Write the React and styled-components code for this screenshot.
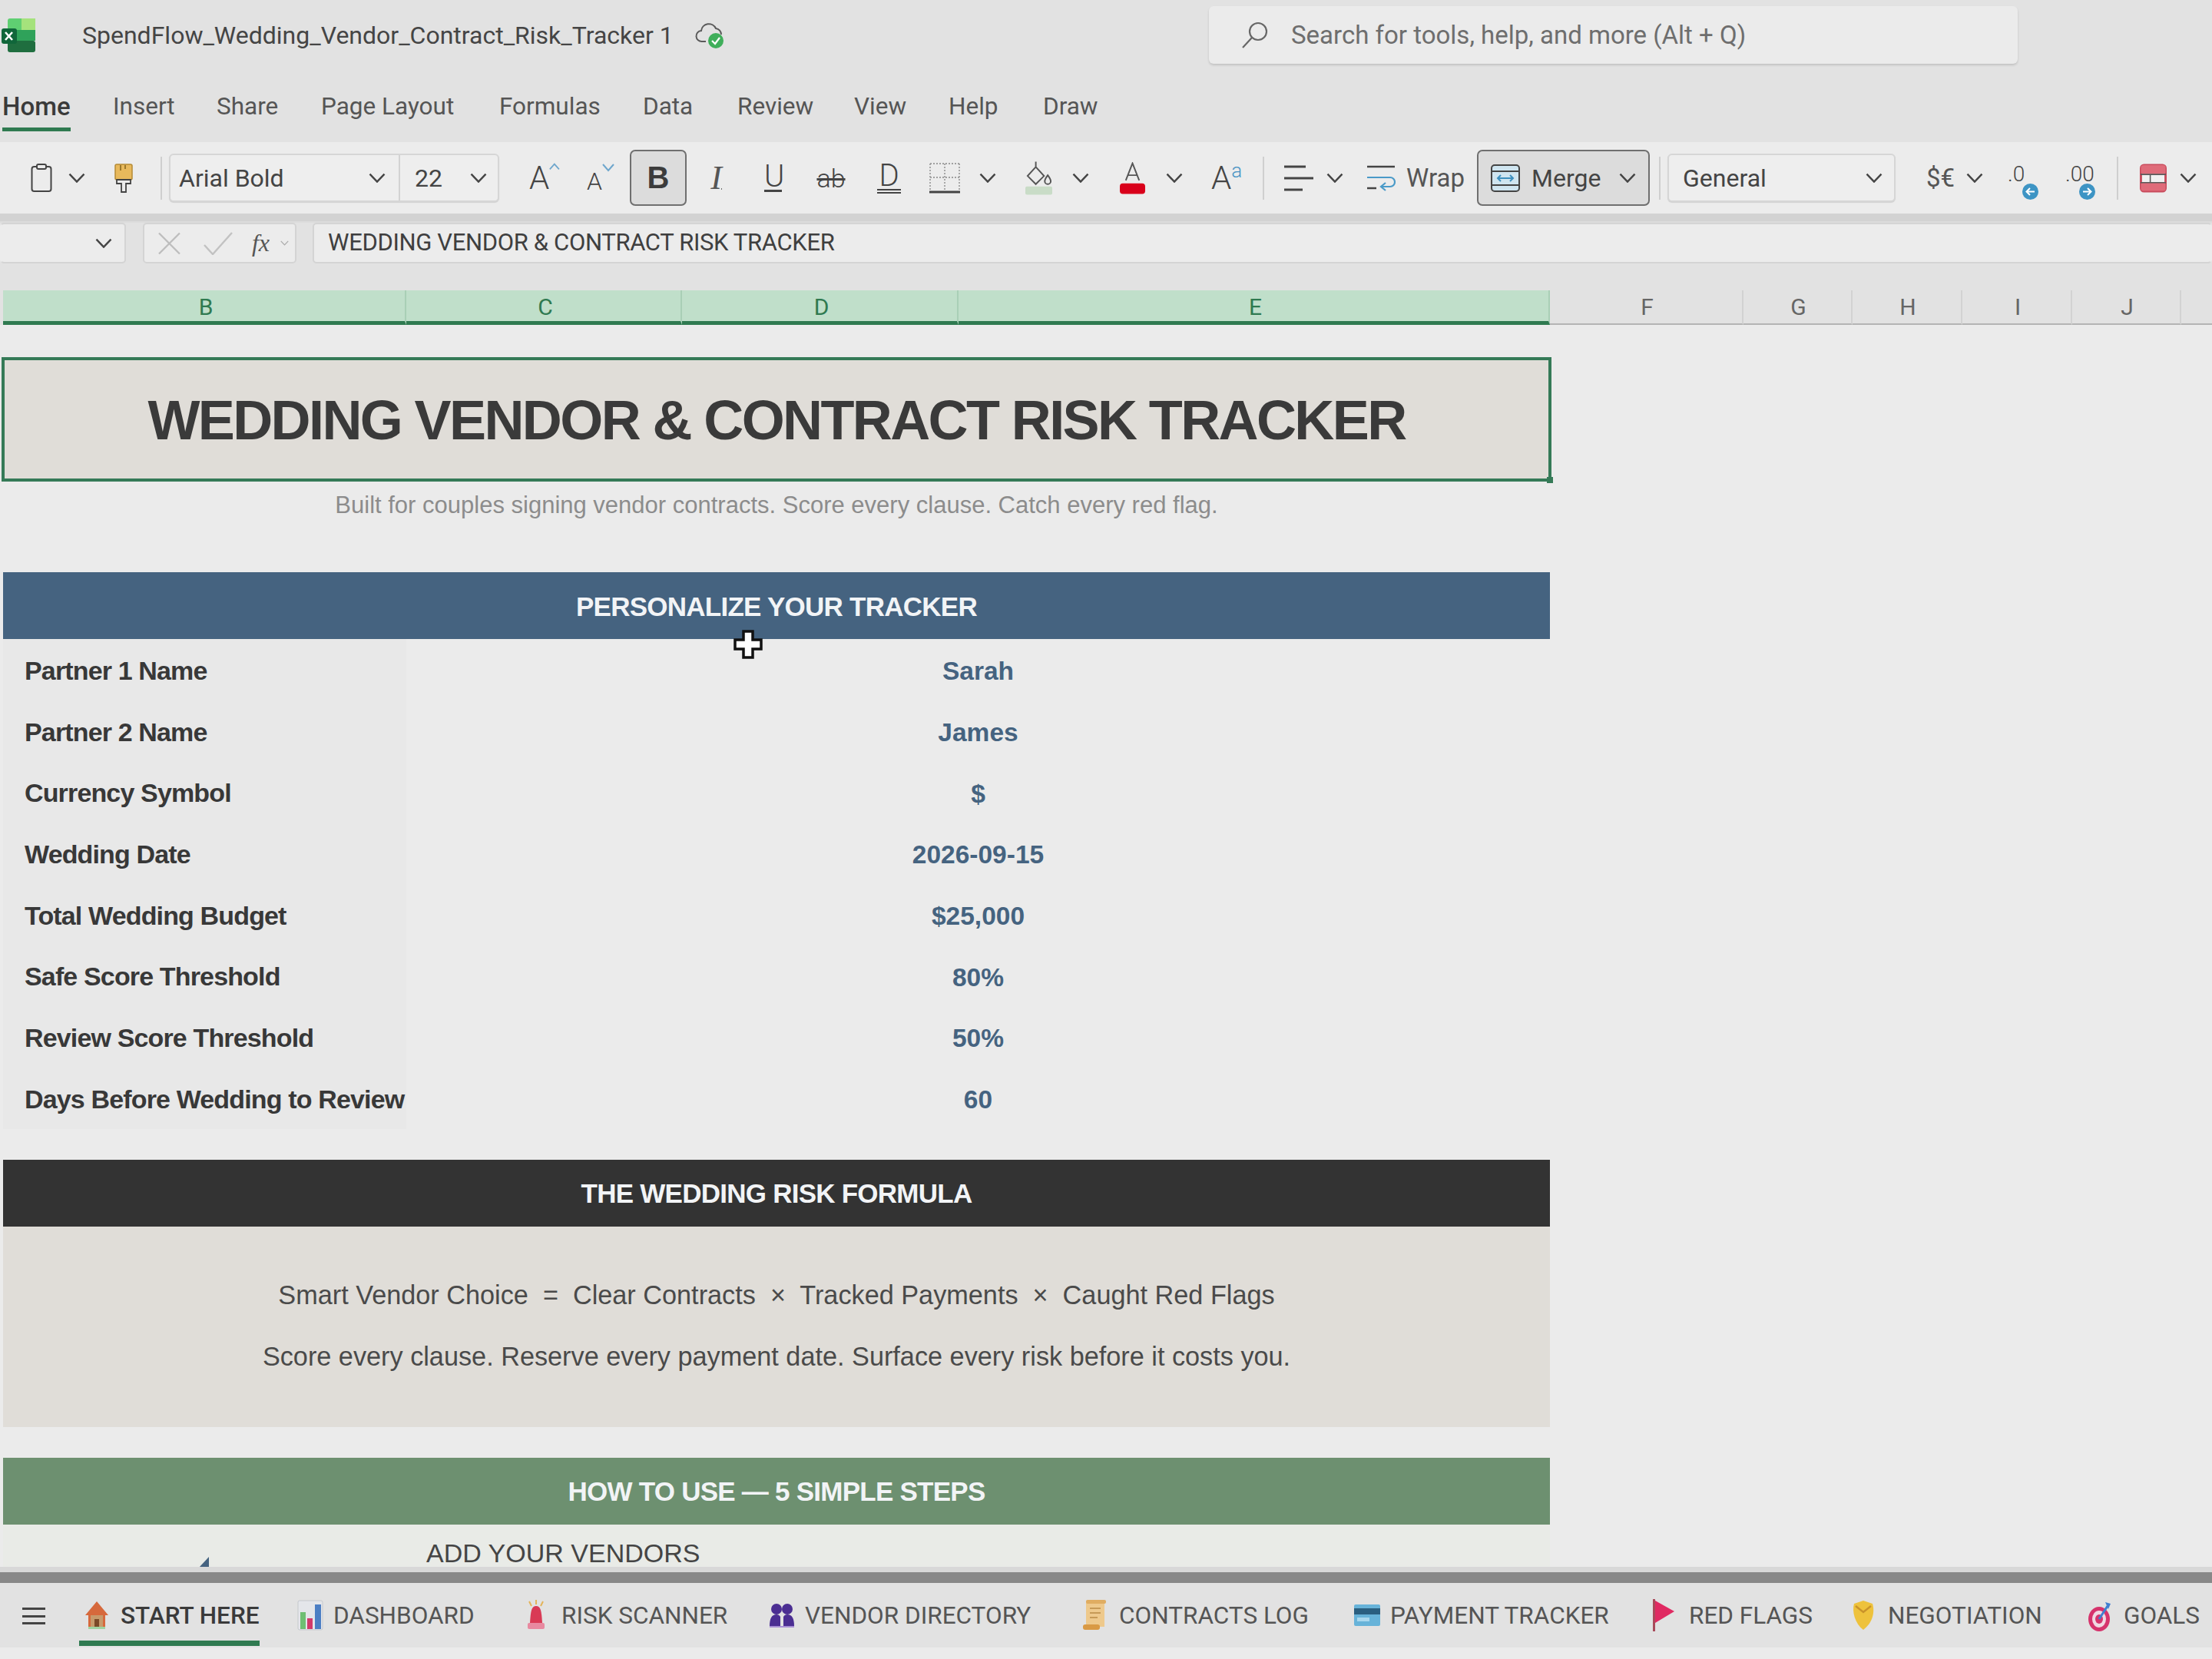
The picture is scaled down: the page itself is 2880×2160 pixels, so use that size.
import React from 'react';
import styled, { createGlobalStyle } from 'styled-components';

const GlobalStyle = createGlobalStyle`
  html, body { margin: 0; padding: 0; background: #ebebeb; }
  * { box-sizing: border-box; }
`;

const ui = `Roboto, "Open Sans", sans-serif`;
const cellFont = `"Liberation Sans", Arial, sans-serif`;

const Page = styled.div`
  position: relative;
  width: 2880px;
  height: 2160px;
  overflow: hidden;
  display: flex;
  flex-direction: column;
  background: #ebebeb;
  font-family: ${ui};
`;

const TitleBar = styled.div`
  height: 92px;
  flex: none;
  display: flex;
  align-items: center;
  background: #e2e2e2;
  padding-left: 2px;
`;

const FileName = styled.span`
  width: 769px;
  margin-left: 61px;
  font-size: 32px;
  color: #454545;
  white-space: nowrap;
`;

const CloudWrap = styled.span`
  display: flex;
  margin-left: 29px;
`;

const SearchBox = styled.div`
  margin-left: 631px;
  margin-top: -1px;
  width: 1053px;
  height: 75px;
  display: flex;
  align-items: center;
  padding-left: 42px;
  gap: 29px;
  border-radius: 6px;
  background: #ebebeb;
  box-shadow: 0 2px 3px rgba(0, 0, 0, 0.14);
  font-size: 33px;
  color: #6e6e6e;
`;

const RibbonTabs = styled.div`
  height: 93px;
  flex: none;
  display: flex;
  align-items: flex-start;
  background: #e2e2e2;
  padding-left: 3px;
`;

const RibbonSlot = styled.div`
  flex: none;
  width: ${p => p.$w}px;
`;

const RibbonTab = styled.span`
  display: inline-block;
  height: 79px;
  padding-top: 28px;
  font-size: ${p => (p.$active ? 33 : 31.5)}px;
  line-height: 38px;
  font-weight: ${p => (p.$active ? 500 : 400)};
  color: ${p => (p.$active ? '#3a3a3a' : '#555')};
  border-bottom: ${p => (p.$active ? '5px solid #2f7a50' : '5px solid transparent')};
`;

const Toolbar = styled.div`
  height: 93px;
  flex: none;
  display: flex;
  align-items: center;
  background: #ececec;
  padding-left: 40px;
  color: #444;
`;

const Tool = styled.span`
  flex: none;
  display: flex;
  align-items: center;
  width: ${p => (p.$w ? `${p.$w}px` : 'auto')};
  margin-left: ${p => p.$m || 0}px;
`;

const Divider = styled.span`
  flex: none;
  width: 2px;
  height: 56px;
  margin-left: ${p => p.$m}px;
  background: #cfcfcf;
`;

const SelectGroup = styled.div`
  flex: none;
  width: ${p => p.$w}px;
  height: 63px;
  margin-left: ${p => p.$m}px;
  display: flex;
  border: 2px solid #d6d6d6;
  border-radius: 6px;
  background: #eeeeee;
  box-shadow: 0 1px 1px rgba(0, 0, 0, 0.12);
`;

const SelectPart = styled.div`
  display: flex;
  align-items: center;
  justify-content: space-between;
  width: ${p => p.$w}px;
  padding: ${p => `0 ${p.$pr}px 0 ${p.$pl}px`};
  font-size: 32px;
  color: #444;
  & + & { border-left: 2px solid #d2d2d2; }
`;

const ToggleButton = styled.span`
  flex: none;
  width: ${p => p.$w}px;
  height: 73px;
  margin-left: ${p => p.$m}px;
  display: flex;
  align-items: center;
  justify-content: ${p => (p.$wide ? 'flex-start' : 'center')};
  padding-left: ${p => (p.$wide ? 16 : 0)}px;
  border: 2px solid #6f6f6f;
  border-radius: 7px;
  background: #dcdcdc;
  font-size: 32px;
  color: #444;
`;

const BoldGlyph = styled.span`
  font-family: ${cellFont};
  font-weight: 700;
  font-size: 40px;
  color: #3c3c3c;
`;

const ItalicGlyph = styled.span`
  width: 32px;
  text-align: center;
  font-family: "Liberation Serif", serif;
  font-style: italic;
  font-size: 44px;
  line-height: 44px;
  color: #555;
  text-decoration: underline;
  text-decoration-thickness: 2px;
  text-underline-offset: -1px;
`;

const LightGlyph = styled.span`
  font-size: ${p => p.$size}px;
  line-height: ${p => p.$size}px;
  font-weight: 300;
  color: ${p => p.$color || '#444'};
  margin-top: ${p => p.$up || 0}px;
`;

const UnderGlyph = styled.span`
  display: block;
  width: ${p => p.$w}px;
  text-align: center;
  font-size: 40px;
  font-weight: 300;
  line-height: 34px;
  color: #444;
  border-bottom: ${p => (p.$double ? '6px double #444' : '3px solid #444')};
`;

const StrikeGlyph = styled.span`
  display: block;
  width: 42px;
  text-align: center;
  font-size: 34px;
  line-height: 36px;
  font-weight: 300;
  color: #444;
  text-decoration: line-through;
  text-decoration-thickness: 3px;
`;

const ToolText = styled.span`
  font-size: 33px;
  color: #555;
  white-space: nowrap;
`;

const DecimalGlyph = styled.span`
  position: relative;
  display: flex;
  width: 40px;
  height: 40px;
  font-size: 28px;
  font-weight: 300;
  line-height: 30px;
  color: #444;
`;

const BlueDot = styled.span`
  position: absolute;
  right: 0;
  bottom: -8px;
  width: 21px;
  height: 21px;
  display: flex;
  align-items: center;
  justify-content: center;
  border-radius: 50%;
  background: #3d94c4;
`;

const GreyStrip = styled.div`
  height: 12px;
  flex: none;
  background: #d2d2d2;
  border-bottom: 2px solid #dcdcdc;
`;

const FormulaBar = styled.div`
  height: 88px;
  flex: none;
  display: flex;
  align-items: flex-start;
  background: #e2e2e2;
`;

const BarBox = styled.div`
  flex: ${p => (p.$grow ? 1 : 'none')};
  width: ${p => p.$w}px;
  height: 53px;
  margin-left: ${p => p.$m}px;
  display: flex;
  align-items: center;
  justify-content: ${p => (p.$end ? 'flex-end' : 'flex-start')};
  padding: ${p => p.$pad};
  background: #ececec;
  border: 2px solid #d4d4d4;
  border-left-color: ${p => (p.$flushLeft ? 'transparent' : '#d4d4d4')};
  border-right-color: ${p => (p.$flushRight ? 'transparent' : '#d4d4d4')};
  border-radius: 5px;
`;

const FormulaText = styled.span`
  margin-top: -3px;
  font-size: 31px;
  color: #3f3f3f;
  letter-spacing: -0.35px;
  white-space: nowrap;
`;

const FxGlyph = styled.span`
  margin-left: 25px;
  font-family: "Liberation Serif", serif;
  font-style: italic;
  font-size: 32px;
  color: #555;
`;

const ColumnRow = styled.div`
  height: 45px;
  flex: none;
  display: flex;
  background: #e2e2e2;
  padding-left: 4px;
`;

const ColumnHead = styled.div`
  width: ${p => p.$w}px;
  display: flex;
  align-items: center;
  justify-content: center;
  padding: ${p => (p.$on ? '3px 0 0 5px' : '0 0 0 3px')};
  font-size: 30px;
  color: ${p => (p.$on ? '#2f7a50' : '#666')};
  background: ${p => (p.$on ? '#c0dfca' : 'transparent')};
  border-right: 2px solid ${p => (p.$on ? '#a9cfb6' : '#d2d2d2')};
  border-bottom: ${p => (p.$on ? '5px solid #2f7a50' : '2px solid #b4b4b4')};
`;

const ColumnFill = styled.div`
  flex: 1;
  border-bottom: 2px solid #b4b4b4;
`;

const Sheet = styled.div`
  height: 1617px;
  flex: none;
  overflow: hidden;
  padding: 42px 0 0 4px;
  width: 2880px;
  background: #ebebeb;
  font-family: ${cellFont};
`;

const Block = styled.div`
  width: 2014px;
`;

const TitleCell = styled.div`
  position: relative;
  width: 2018px;
  height: 162px;
  margin-left: -2px;
  padding-top: 2px;
  display: flex;
  align-items: center;
  justify-content: center;
  background: #e0ddd8;
  border: 4px solid #357a57;
  font-size: 72px;
  font-weight: 700;
  letter-spacing: -2.6px;
  color: #3a3a3a;
  white-space: nowrap;
`;

const Handle = styled.span`
  position: absolute;
  right: -6px;
  bottom: -6px;
  width: 8px;
  height: 8px;
  background: #357a57;
`;

const Subtitle = styled.div`
  height: 62px;
  width: 2014px;
  display: flex;
  align-items: center;
  justify-content: center;
  font-size: 31px;
  color: #8c8c8c;
`;

const SectionHead = styled.div`
  width: 2014px;
  height: 87px;
  margin-top: ${p => p.$top}px;
  padding-top: 2px;
  display: flex;
  align-items: center;
  justify-content: center;
  background: ${p => p.$bg};
  color: #f2f4f6;
  font-size: 35px;
  font-weight: 700;
  letter-spacing: -0.75px;
  white-space: nowrap;
`;

const SettingRow = styled.div`
  display: grid;
  grid-template-columns: 525px 1489px;
  height: 79.7px;
  align-items: stretch;
`;

const SettingLabel = styled.div`
  display: flex;
  align-items: center;
  padding: 3px 0 0 28px;
  background: #e8e8e8;
  font-size: 34px;
  font-weight: 700;
  letter-spacing: -0.85px;
  color: #383838;
  white-space: nowrap;
`;

const SettingValue = styled.div`
  display: flex;
  align-items: center;
  justify-content: center;
  padding-top: 5px;
  font-size: 33.5px;
  font-weight: 700;
  color: #456380;
`;

const FormulaBlock = styled.div`
  width: 2014px;
  height: 261px;
  padding-top: 50px;
  background: #e0ddd8;
  color: #4a4a4a;
  font-size: 34.25px;
`;

const FormulaLine = styled.div`
  height: 80px;
  display: flex;
  align-items: center;
  justify-content: center;
  white-space: pre;
`;

const StepRow = styled.div`
  display: flex;
  height: 76px;
  align-items: center;
  padding-left: 551px;
  position: relative;
  font-size: 34px;
  color: #454545;
  background: #e9ebe7;
  width: 2014px;
`;

const StepMark = styled.span`
  position: absolute;
  left: 255px;
  top: 42px;
  display: flex;
`;

const ShadeStrip = styled.div`
  height: 7px;
  flex: none;
  background: #d8d8d8;
`;

const ScrollStrip = styled.div`
  height: 14px;
  flex: none;
  background: #888888;
`;

const SheetTabs = styled.div`
  height: 84px;
  flex: none;
  display: flex;
  align-items: flex-start;
  background: #e2e2e2;
  padding-left: 29px;
`;

const MenuGlyph = styled.span`
  flex: none;
  width: 30px;
  height: 22px;
  margin-top: 32px;
  margin-right: 44px;
  border-top: 3px solid #444;
  border-bottom: 3px solid #444;
  position: relative;
  &::after {
    content: '';
    position: absolute;
    left: 0;
    right: 0;
    top: 6.5px;
    height: 3px;
    background: #444;
  }
`;

const TabSlot = styled.div`
  flex: none;
  width: ${p => p.$w}px;
`;

const SheetTab = styled.div`
  display: inline-flex;
  align-items: center;
  height: 82px;
  padding: 9px 0 0 7px;
  font-size: 31.5px;
  font-weight: ${p => (p.$active ? 500 : 400)};
  color: ${p => (p.$active ? '#3a3a3a' : '#555')};
  white-space: nowrap;
  border-bottom: 7px solid ${p => (p.$active ? '#2f7a50' : 'transparent')};
`;

const TabIconSlot = styled.span`
  flex: none;
  display: flex;
  align-items: center;
  width: 47px;
`;

const FootStrip = styled.div`
  flex: 1;
  background: #ebebeb;
`;

const Cursor = styled.svg`
  position: absolute;
  left: 955px;
  top: 820px;
`;

const Chevron = ({ m = 0, w = 22, color = '#444' }) => (
  <Tool $m={m}>
    <svg width={w} height={w * 0.6} viewBox="0 0 22 13" fill="none">
      <path d="M1.5 1.5 11 11.5 20.5 1.5" stroke={color} strokeWidth="2.4" />
    </svg>
  </Tool>
);

const ExcelLogo = () => (
  <svg width="44" height="44" viewBox="0 0 44 44">
    <rect x="8" y="0" width="36" height="15" rx="3" fill="#5fcf72" />
    <rect x="26" y="0" width="18" height="15" fill="#a5e27c" />
    <rect x="8" y="15" width="36" height="14" fill="#2fa25a" />
    <rect x="8" y="29" width="36" height="15" rx="3" fill="#1f6e3f" />
    <rect x="0" y="13" width="20" height="20" rx="3" fill="#10663a" />
    <path d="M5 18l9 10M14 18l-9 10" stroke="#fff" strokeWidth="2.6" />
  </svg>
);

const CloudIcon = () => (
  <svg width="38" height="36" viewBox="0 0 38 36" fill="none">
    <path d="M14 26H9a7 7 0 0 1-1-14 10 10 0 0 1 19-3 8 8 0 0 1 7 8" stroke="#5a5a5a" strokeWidth="2" />
    <circle cx="27" cy="25" r="10" fill="#3fae5a" />
    <path d="M22 25l4 4 6-8" stroke="#fff" strokeWidth="2.2" />
  </svg>
);

const SearchIcon = () => (
  <svg width="36" height="36" viewBox="0 0 36 36" fill="none" stroke="#666" strokeWidth="2.2">
    <circle cx="22" cy="13" r="11" />
    <path d="M14 21 2 34" />
  </svg>
);

const ClipboardIcon = () => (
  <svg width="28" height="38" viewBox="0 0 28 38" fill="none" stroke="#444" strokeWidth="2">
    <rect x="1.5" y="4" width="25" height="32" rx="3" />
    <rect x="8" y="1" width="12" height="6" rx="2" fill="#ececec" />
  </svg>
);

const BrushIcon = () => (
  <svg width="24" height="38" viewBox="0 0 24 38">
    <rect x="1" y="1" width="22" height="20" rx="2" fill="#e8b95c" stroke="#b58a35" strokeWidth="1.5" />
    <path d="M8 2v7M14 2v5" stroke="#8a6a20" strokeWidth="1.6" />
    <path d="M3 21h18v5h-6v11H9V26H3z" fill="#ececec" stroke="#444" strokeWidth="1.8" />
  </svg>
);

const Caret = ({ up }) => (
  <svg width="16" height="12" viewBox="0 0 16 12" fill="none" style={{ alignSelf: 'flex-start' }}>
    <path d={up ? 'M1 10 8 2 15 10' : 'M1 2 8 10 15 2'} stroke="#6ea6cc" strokeWidth="2" />
  </svg>
);

const BordersIcon = () => (
  <svg width="40" height="40" viewBox="0 0 40 40" fill="none">
    <path d="M1 1h38M1 1v36M39 1v36M20 1v36M1 19h38" stroke="#a0a0a0" strokeWidth="1.8" strokeDasharray="2 2" />
    <path d="M0 38h40" stroke="#444" strokeWidth="3" />
  </svg>
);

const FillIcon = () => (
  <svg width="36" height="44" viewBox="0 0 36 44" fill="none">
    <path d="M14 0v8M14 7 3 19l11 11 11-11z" stroke="#555" strokeWidth="2" />
    <path d="M30 18c3 4 4 6 4 8a4 4 0 0 1-8 0c0-2 1-4 4-8z" stroke="#555" strokeWidth="2" />
    <rect x="0" y="33" width="36" height="11" rx="2" fill="#c9dcc7" />
  </svg>
);

const FontColorIcon = () => (
  <svg width="34" height="42" viewBox="0 0 34 42" fill="none">
    <path d="M8 24 17 1l9 23M11 17h12" stroke="#555" strokeWidth="2" />
    <rect x="0" y="28" width="34" height="14" rx="4" fill="#d9001b" />
  </svg>
);

const AlignIcon = () => (
  <svg width="38" height="34" viewBox="0 0 38 34" stroke="#444" strokeWidth="3">
    <path d="M0 2h28M0 17h38M0 32h24" />
  </svg>
);

const WrapIcon = () => (
  <svg width="38" height="34" viewBox="0 0 38 34" fill="none">
    <path d="M1 2h36M1 30h12" stroke="#444" strokeWidth="2.6" />
    <path d="M1 16h30a5 5 0 0 1 0 12H20" stroke="#4a9ac8" strokeWidth="2.2" />
    <path d="M25 23l-6 5 6 5" stroke="#4a9ac8" strokeWidth="2.2" />
  </svg>
);

const MergeIcon = () => (
  <svg width="38" height="36" viewBox="0 0 38 36" fill="none">
    <rect x="1" y="1" width="36" height="34" rx="4" fill="#cfe5f0" stroke="#444" strokeWidth="2" />
    <path d="M1 9h36M1 27h36" stroke="#444" strokeWidth="2" />
    <path d="M9 18h20M13 14l-4 4 4 4M25 14l4 4-4 4" stroke="#3d8fbe" strokeWidth="2" />
  </svg>
);

const TableIcon = () => (
  <svg width="36" height="38" viewBox="0 0 36 38" fill="none">
    <rect x="1.5" y="1.5" width="33" height="35" rx="4" fill="#f1f1f1" stroke="#c84b5c" strokeWidth="3" />
    <rect x="1.5" y="1.5" width="33" height="12" rx="3" fill="#df6b79" />
    <rect x="1.5" y="25" width="33" height="11" rx="3" fill="#df6b79" />
    <path d="M1 14h34M1 25h34M14 14v11" stroke="#5a5a5a" strokeWidth="1.6" />
  </svg>
);

const DotArrow = ({ right }) => (
  <svg width="13" height="13" viewBox="0 0 13 13" fill="none" stroke="#fff" strokeWidth="2">
    <path d={right ? 'M1 6.5h10M7 2l4.5 4.5L7 11' : 'M12 6.5H2M6 2 1.5 6.5 6 11'} />
  </svg>
);

const HomeEmoji = () => (
  <svg width="32" height="38" viewBox="0 0 32 38">
    <path d="M16 1 1 19h4v15h22V19h4z" fill="#d6693c" />
    <rect x="8" y="19" width="16" height="15" fill="#c79a6b" />
    <rect x="13" y="24" width="6" height="10" fill="#7a4a28" />
    <rect x="5" y="34" width="22" height="3" fill="#9fd3a0" />
  </svg>
);

const ChartEmoji = () => (
  <svg width="34" height="40" viewBox="0 0 34 40">
    <rect x="1" y="1" width="32" height="38" rx="2" fill="#e4e6ea" stroke="#c5c8cd" />
    <rect x="4" y="16" width="7" height="22" fill="#6fbf73" />
    <rect x="13" y="24" width="7" height="14" fill="#d23a6b" />
    <rect x="23" y="6" width="8" height="32" fill="#4c7fc4" />
  </svg>
);

const SirenEmoji = () => (
  <svg width="28" height="40" viewBox="0 0 28 40">
    <path d="M14 0v6M5 2l3 6M23 2l-3 6" stroke="#e4b45a" strokeWidth="2" />
    <path d="M14 8c6 0 7 6 8 22H6C7 14 8 8 14 8z" fill="#d93a55" />
    <rect x="3" y="30" width="22" height="8" rx="2" fill="#e889a0" />
  </svg>
);

const PeopleEmoji = () => (
  <svg width="34" height="34" viewBox="0 0 34 34" fill="#4b2e92">
    <circle cx="10" cy="9" r="7" />
    <circle cx="24" cy="9" r="7" />
    <path d="M1 31c0-10 3-15 9-15 2 0 4 1 5 3v12zM19 31V19c1-2 3-3 5-3 6 0 9 5 9 15z" />
    <rect x="1" y="31" width="32" height="2" fill="#a88fd6" />
  </svg>
);

const ScrollEmoji = () => (
  <svg width="30" height="40" viewBox="0 0 30 40">
    <rect x="4" y="1" width="24" height="34" fill="#eec98c" />
    <rect x="0" y="32" width="22" height="7" rx="3" fill="#d99a45" />
    <rect x="4" y="0" width="26" height="5" rx="2" fill="#e0ad62" />
    <path d="M9 11h14M9 17h14M9 23h10" stroke="#b98a45" strokeWidth="1.6" />
  </svg>
);

const CardEmoji = () => (
  <svg width="34" height="30" viewBox="0 0 34 30">
    <rect x="0" y="1" width="34" height="28" rx="2" fill="#67b3d9" />
    <rect x="0" y="6" width="34" height="8" fill="#2a5f80" />
    <rect x="4" y="18" width="16" height="5" fill="#a9d8ee" />
  </svg>
);

const FlagEmoji = () => (
  <svg width="28" height="42" viewBox="0 0 28 42">
    <rect x="0" y="0" width="3" height="42" fill="#a84a5a" />
    <path d="M3 2 28 16 3 31z" fill="#e02a62" />
  </svg>
);

const HandshakeEmoji = () => (
  <svg width="30" height="38" viewBox="0 0 30 38">
    <path d="M3 4 15 0l12 4c3 10 1 24-12 34C4 30 0 14 3 4z" fill="#eec23c" />
    <path d="M5 7l10 8 10-8" stroke="#c9932a" strokeWidth="2.4" fill="none" />
  </svg>
);

const TargetEmoji = () => (
  <svg width="32" height="44" viewBox="0 0 32 44" fill="none">
    <ellipse cx="15" cy="27" rx="14" ry="16" fill="#d6336c" />
    <ellipse cx="15" cy="27" rx="9" ry="11" fill="#f0d8e2" />
    <ellipse cx="15" cy="27" rx="5" ry="6" fill="#d6336c" />
    <path d="M15 27 26 10" stroke="#3f7fd0" strokeWidth="3" />
    <path d="M23 5l7 2-3 7z" fill="#3f7fd0" />
  </svg>
);

const COLUMNS = [
  { id: 'B', w: 525, on: true },
  { id: 'C', w: 359, on: true },
  { id: 'D', w: 360, on: true },
  { id: 'E', w: 770, on: true },
  { id: 'F', w: 252 },
  { id: 'G', w: 142 },
  { id: 'H', w: 143 },
  { id: 'I', w: 143 },
  { id: 'J', w: 142 },
];

const SETTINGS = [
  ['Partner 1 Name', 'Sarah'],
  ['Partner 2 Name', 'James'],
  ['Currency Symbol', '$'],
  ['Wedding Date', '2026-09-15'],
  ['Total Wedding Budget', '$25,000'],
  ['Safe Score Threshold', '80%'],
  ['Review Score Threshold', '50%'],
  ['Days Before Wedding to Review', '60'],
];

const RIBBON = [
  ['Home', 144], ['Insert', 135], ['Share', 136], ['Page Layout', 232], ['Formulas', 187],
  ['Data', 123], ['Review', 152], ['View', 123], ['Help', 123], ['Draw', 90],
];

const TABS = [
  ['START HERE', HomeEmoji, 277],
  ['DASHBOARD', ChartEmoji, 297],
  ['RISK SCANNER', SirenEmoji, 317],
  ['VENDOR DIRECTORY', PeopleEmoji, 409],
  ['CONTRACTS LOG', ScrollEmoji, 353],
  ['PAYMENT TRACKER', CardEmoji, 389],
  ['RED FLAGS', FlagEmoji, 259],
  ['NEGOTIATION', HandshakeEmoji, 307],
  ['GOALS', TargetEmoji, 160],
];

const App = () => (
  <Page>
    <GlobalStyle />
    <TitleBar>
      <ExcelLogo />
      <FileName>SpendFlow_Wedding_Vendor_Contract_Risk_Tracker 1</FileName>
      <CloudWrap><CloudIcon /></CloudWrap>
      <SearchBox>
        <SearchIcon />
        Search for tools, help, and more (Alt + Q)
      </SearchBox>
    </TitleBar>

    <RibbonTabs>
      {RIBBON.map(([name, w], i) => (
        <RibbonSlot key={name} $w={w}>
          <RibbonTab $active={i === 0}>{name}</RibbonTab>
        </RibbonSlot>
      ))}
    </RibbonTabs>

    <Toolbar>
      <Tool $w={28}><ClipboardIcon /></Tool>
      <Chevron m={21} />
      <Tool $m={38} $w={24}><BrushIcon /></Tool>
      <Divider $m={36} />
      <SelectGroup $w={430} $m={9}>
        <SelectPart $w={297} $pl={11} $pr={17}>Arial Bold<Chevron /></SelectPart>
        <SelectPart $w={129} $pl={19} $pr={14}>22<Chevron /></SelectPart>
      </SelectGroup>
      <Tool $m={39} $w={40}><LightGlyph $size={42}>A</LightGlyph><Caret up /></Tool>
      <Tool $m={35} $w={37}><LightGlyph $size={32} $up={8}>A</LightGlyph><Caret /></Tool>
      <ToggleButton $w={74} $m={19}><BoldGlyph>B</BoldGlyph></ToggleButton>
      <Tool $m={23} $w={31}><ItalicGlyph>I</ItalicGlyph></Tool>
      <Tool $m={47} $w={23}><UnderGlyph $w={23}>U</UnderGlyph></Tool>
      <Tool $m={43} $w={42}><StrikeGlyph>ab</StrikeGlyph></Tool>
      <Tool $m={39} $w={31}><UnderGlyph $w={31} $double>D</UnderGlyph></Tool>
      <Tool $m={37} $w={40}><BordersIcon /></Tool>
      <Chevron m={25} />
      <Tool $m={38} $w={35}><FillIcon /></Tool>
      <Chevron m={26} />
      <Tool $m={40} $w={33}><FontColorIcon /></Tool>
      <Chevron m={27} />
      <Tool $m={37} $w={38}><LightGlyph $size={42}>A</LightGlyph><LightGlyph $size={26} $color="#4a94c4" $up={-20}>a</LightGlyph></Tool>
      <Divider $m={29} />
      <Tool $m={26} $w={38}><AlignIcon /></Tool>
      <Chevron m={17} />
      <Tool $m={30} $w={38}><WrapIcon /></Tool>
      <Tool $m={14} $w={78}><ToolText>Wrap</ToolText></Tool>
      <ToggleButton $w={225} $m={14} $wide>
        <MergeIcon />
        <Tool $m={15} $w={94}>Merge</Tool>
        <Chevron m={20} />
      </ToggleButton>
      <Divider $m={12} />
      <SelectGroup $w={297} $m={9}>
        <SelectPart $w={293} $pl={18} $pr={15}>General<Chevron /></SelectPart>
      </SelectGroup>
      <Tool $m={40} $w={35}><ToolText>$€</ToolText></Tool>
      <Chevron m={17} />
      <Tool $m={32} $w={41}><DecimalGlyph>.0<BlueDot><DotArrow /></BlueDot></DecimalGlyph></Tool>
      <Tool $m={34} $w={39}><DecimalGlyph>.00<BlueDot><DotArrow right /></BlueDot></DecimalGlyph></Tool>
      <Divider $m={28} />
      <Tool $m={28} $w={35}><TableIcon /></Tool>
      <Chevron m={17} />
    </Toolbar>
    <GreyStrip />

    <FormulaBar>
      <BarBox $w={164} $m={0} $flushLeft $end $pad="0 16px 0 0"><Chevron /></BarBox>
      <BarBox $w={200} $m={22} $pad="0 8px 0 18px">
        <svg width="30" height="30" viewBox="0 0 30 30" stroke="#bdbdbd" strokeWidth="2.4"><path d="M1 1l28 28M29 1 1 29" /></svg>
        <Tool $m={30}>
          <svg width="38" height="30" viewBox="0 0 38 30" fill="none" stroke="#c2c2c2" strokeWidth="2.4"><path d="M1 17l11 12L37 1" /></svg>
        </Tool>
        <FxGlyph>fx</FxGlyph>
        <Chevron m={14} w={11} color="#aaa" />
      </BarBox>
      <BarBox $grow $m={21} $flushRight $pad="0 0 0 18px">
        <FormulaText>WEDDING VENDOR &amp; CONTRACT RISK TRACKER</FormulaText>
      </BarBox>
    </FormulaBar>

    <ColumnRow>
      {COLUMNS.map(c => (
        <ColumnHead key={c.id} $w={c.w} $on={c.on}>{c.id}</ColumnHead>
      ))}
      <ColumnFill />
    </ColumnRow>

    <Sheet>
      <TitleCell>
        WEDDING VENDOR &amp; CONTRACT RISK TRACKER
        <Handle />
      </TitleCell>
      <Subtitle>Built for couples signing vendor contracts. Score every clause. Catch every red flag.</Subtitle>

      <SectionHead $bg="#456380" $top={56}>PERSONALIZE YOUR TRACKER</SectionHead>
      <Block>
        {SETTINGS.map(([label, value]) => (
          <SettingRow key={label}>
            <SettingLabel>{label}</SettingLabel>
            <SettingValue>{value}</SettingValue>
          </SettingRow>
        ))}
      </Block>

      <SectionHead $bg="#333333" $top={40}>THE WEDDING RISK FORMULA</SectionHead>
      <FormulaBlock>
        <FormulaLine>{'Smart Vendor Choice  =  Clear Contracts  ×  Tracked Payments  ×  Caught Red Flags'}</FormulaLine>
        <FormulaLine>Score every clause. Reserve every payment date. Surface every risk before it costs you.</FormulaLine>
      </FormulaBlock>

      <SectionHead $bg="#6d9070" $top={40}>HOW TO USE — 5 SIMPLE STEPS</SectionHead>
      <StepRow>
        ADD YOUR VENDORS
        <StepMark>
          <svg width="14" height="14" viewBox="0 0 14 14"><path d="M13 0v14H0z" fill="#456380" /></svg>
        </StepMark>
      </StepRow>
    </Sheet>

    <ShadeStrip />
    <ScrollStrip />
    <SheetTabs>
      <MenuGlyph />
      {TABS.map(([name, Icon, w], i) => (
        <TabSlot key={name} $w={w}>
          <SheetTab $active={i === 0}>
            <TabIconSlot><Icon /></TabIconSlot>
            {name}
          </SheetTab>
        </TabSlot>
      ))}
    </SheetTabs>
    <FootStrip />

    <Cursor width="38" height="38" viewBox="0 0 38 38">
      <path d="M13 2h12v11h11v12H25v11H13V25H2V13h11z" fill="#fff" stroke="#111" strokeWidth="3.5" />
    </Cursor>
  </Page>
);

export default App;
